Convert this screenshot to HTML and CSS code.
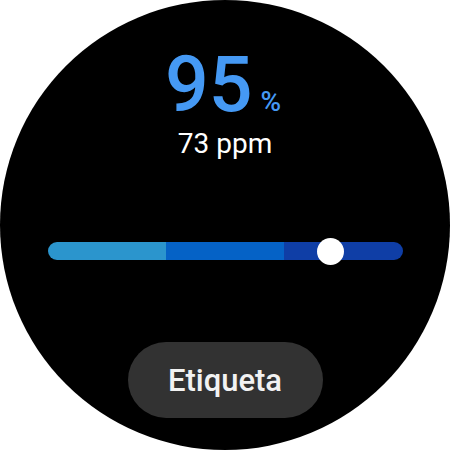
FILE: index.html
```html
<!DOCTYPE html>
<html lang="es">
<head>
    <meta charset="UTF-8">
    <meta name="viewport" content="width=device-width, initial-scale=1.0">
    <title>SpO2</title>
    <link rel="stylesheet" href="styles.css">
</head>
<body>
    <div class="watch">
        <div class="value">
            <span class="number">95</span>
            <span class="unit">%</span>
        </div>
        <div class="rate">73 ppm</div>

        <div class="slider">
            <div class="track">
                <div class="seg seg-low"></div>
                <div class="seg seg-mid"></div>
                <div class="seg seg-high"></div>
            </div>
            <div class="knob"></div>
        </div>

        <button class="label">Etiqueta</button>
    </div>
</body>
</html>
```

FILE: styles.css
```css
body {
    margin: 0;
    background: #ffffff;
    font-family: Roboto, "Liberation Sans", sans-serif;
}
.watch {
    width: 450px;
    height: 450px;
    border-radius: 50%;
    background: #000000;
    display: flex;
    flex-direction: column;
    align-items: center;
    padding-top: 47px;
    box-sizing: border-box;
}
.value {
    display: flex;
    align-items: baseline;
    color: #4599f4;
    line-height: 1;
    margin-left: -4px;
}
.number {
    font-size: 77px;
    font-weight: 500;
}
.unit {
    font-size: 28px;
    font-weight: 500;
    margin-left: 8px;
}
.rate {
    color: #ffffff;
    font-size: 28px;
    line-height: 1;
    margin-top: 6px;
}
.slider {
    position: relative;
    width: 355px;
    height: 18px;
    margin-top: 84px;
}
.track {
    display: grid;
    grid-template-columns: 1fr 1fr 1fr;
    height: 100%;
    border-radius: 9px;
    overflow: hidden;
}
.seg-low {
    background: #2b95cd;
}
.seg-mid {
    background: #0562c6;
}
.seg-high {
    background: #0f3ea6;
}
.knob {
    position: absolute;
    left: 269px;
    top: -4.5px;
    width: 27px;
    height: 27px;
    border-radius: 50%;
    background: #ffffff;
}
.label {
    margin-top: 82px;
    width: 195px;
    height: 76px;
    border: none;
    border-radius: 38px;
    background: #323232;
    color: #f2f2f2;
    font-family: Roboto, "Liberation Sans", sans-serif;
    font-size: 31px;
    font-weight: 500;
    padding: 0;
}
```
